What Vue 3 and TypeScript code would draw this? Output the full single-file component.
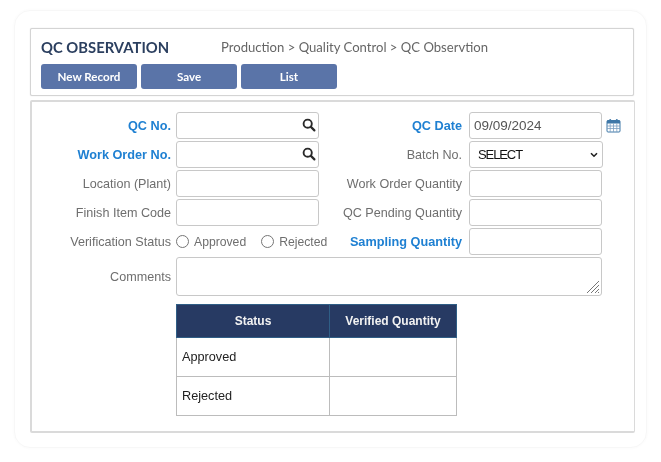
<script setup lang="ts">
const buttons: string[] = ['New Record', 'Save', 'List']
</script>

<template>
  <div class="page">
    <div class="card">
      <header class="panel head">
        <div class="title-row">
          <h1 class="title">QC OBSERVATION</h1>
          <span class="crumbs">Production &gt; Quality Control &gt; QC Observtion</span>
        </div>
        <div class="actions">
          <button v-for="b in buttons" :key="b" class="btn" type="button">{{ b }}</button>
        </div>
      </header>

      <section class="panel body">
        <div class="form">
          <label class="lbl req">QC No.</label>
          <div class="search"><input class="inp" type="text" />
            <svg class="mag" viewBox="0 0 14 14" width="14" height="14"><circle cx="5.7" cy="5.7" r="4.1" fill="none" stroke="#2a2a2a" stroke-width="1.9"/><path d="M8.9 8.9 L12.4 12.4" stroke="#2a2a2a" stroke-width="2.2" stroke-linecap="round"/></svg>
          </div>
          <label class="lbl lbl-r req">QC Date</label>
          <input class="inp date" type="text" value="09/09/2024" />
          <svg class="cal" viewBox="0 0 15 15" width="15" height="15">
            <rect x="1" y="2.5" width="13" height="11.5" rx="1" fill="#fff" stroke="#3f78a8" stroke-width="1"/>
            <rect x="1" y="2.5" width="13" height="3" fill="#3f78a8"/>
            <rect x="3.2" y="1" width="2" height="3" rx="1" fill="#3f78a8"/><rect x="9.8" y="1" width="2" height="3" rx="1" fill="#3f78a8"/>
            <path d="M1 8h13M1 10.5h13M4.2 5.5v8.5M7.5 5.5v8.5M10.8 5.5v8.5" stroke="#7b9fc2" stroke-width=".8" fill="none"/>
          </svg>

          <label class="lbl req">Work Order No.</label>
          <div class="search"><input class="inp" type="text" />
            <svg class="mag" viewBox="0 0 14 14" width="14" height="14"><circle cx="5.7" cy="5.7" r="4.1" fill="none" stroke="#2a2a2a" stroke-width="1.9"/><path d="M8.9 8.9 L12.4 12.4" stroke="#2a2a2a" stroke-width="2.2" stroke-linecap="round"/></svg>
          </div>
          <label class="lbl lbl-r">Batch No.</label>
          <select class="sel"><option>SELECT</option></select>
          <span></span>

          <label class="lbl">Location (Plant)</label>
          <input class="inp" type="text" />
          <label class="lbl lbl-r">Work Order Quantity</label>
          <input class="inp" type="text" />
          <span></span>

          <label class="lbl">Finish Item Code</label>
          <input class="inp" type="text" />
          <label class="lbl lbl-r">QC Pending Quantity</label>
          <input class="inp" type="text" />
          <span></span>

          <label class="lbl">Verification Status</label>
          <div class="radios">
            <label class="radio"><input type="radio" name="vs" />Approved</label>
            <label class="radio"><input type="radio" name="vs" />Rejected</label>
          </div>
          <label class="lbl lbl-r req">Sampling Quantity</label>
          <input class="inp" type="text" />
          <span></span>

          <label class="lbl comments-lbl">Comments</label>
          <div class="area-wrap">
            <textarea class="area"></textarea>
            <svg class="grip" viewBox="0 0 14 14" width="14" height="14"><path d="M1 13 13 1M5 13 13 5M9 13l4-4M12 13l1-1" stroke="#777" stroke-width="1" fill="none"/></svg>
          </div>
        </div>

        <table class="tbl">
          <thead>
            <tr><th class="c1">Status</th><th class="c2">Verified Quantity</th></tr>
          </thead>
          <tbody>
            <tr><td>Approved</td><td></td></tr>
            <tr><td>Rejected</td><td></td></tr>
          </tbody>
        </table>
      </section>
    </div>
  </div>
</template>

<style>
html, body { margin: 0; background: #fff; }
</style>

<style scoped>
.page {
  width: 661px;
  height: 462px;
  box-sizing: border-box;
  padding: 10px 14px 14px;
  background: #fff;
  font-family: "Liberation Sans", Arial, sans-serif;
  filter: blur(0.3px);
}
.card {
  width: 633px;
  height: 438px;
  box-sizing: border-box;
  padding: 17px 12px 0 15px;
  border: 1px solid #f7f7f7;
  border-radius: 16px;
  box-shadow: 0 0 3px rgba(0, 0, 0, .03);
  display: flex;
  flex-direction: column;
  gap: 4px;
}
.panel {
  box-sizing: border-box;
  border: 1px solid #d4d4d4;
  border-radius: 2px;
  background: #fff;
}
.head {
  width: 604px;
  height: 68px;
  padding: 0 10px;
  box-shadow: 0 0 1px #ccc;
}
.title-row {
  display: flex;
  align-items: center;
  height: 35px;
}
.title {
  margin: 0;
  width: 180px;
  font: 700 14.8px Lato, "Open Sans", sans-serif;
  color: #2b3f5f;
  white-space: nowrap;
}
.crumbs {
  font: 400 13.1px Lato, "Open Sans", sans-serif;
  color: #666;
  white-space: nowrap;
}
.actions {
  display: flex;
  gap: 4px;
}
.btn {
  width: 96px;
  height: 25px;
  padding: 0;
  border: 0;
  border-radius: 3px;
  background: #5a74a8;
  color: #fff;
  font: 700 11.6px Lato, "Open Sans", sans-serif;
}
.body {
  width: 605px;
  height: 333px;
  padding: 10px 0 0 0;
  border-width: 2px 1px 2px 2px;
  border-color: #dadada;
}
.form {
  display: grid;
  grid-template-columns: 144px 143px 150px 133px 15px;
  grid-auto-rows: 27px;
  row-gap: 2px;
  align-items: center;
}
.lbl {
  padding-right: 5px;
  font-size: 12.6px;
  color: #6e6e6e;
  text-align: right;
  white-space: nowrap;
}
.lbl-r { padding-right: 7px; }
.req {
  color: #1f80d2;
  font-weight: 700;
  font-size: 12.7px;
}
.inp {
  display: block;
  width: 100%;
  height: 27px;
  box-sizing: border-box;
  padding: 0 4px;
  border: 1px solid #c8c8c8;
  border-radius: 3px;
  background: #fff;
  font: 12px "Liberation Sans", Arial, sans-serif;
  color: #555;
  outline: none;
}
.date { font-size: 13.5px; }
.search { position: relative; }
.mag {
  position: absolute;
  right: 3px;
  top: 6px;
}
.cal { margin-left: 4px; }
.sel {
  width: 134px;
  height: 27px;
  box-sizing: border-box;
  padding: 0 8px;
  border: 1px solid #c8c8c8;
  border-radius: 3px;
  appearance: none;
  background: #fff url("data:image/svg+xml;utf8,<svg xmlns='http://www.w3.org/2000/svg' width='8' height='6'><path d='M1 1.2 4 4.2 7 1.2' fill='none' stroke='%23222' stroke-width='1.6'/></svg>") no-repeat right 4px center;
  font: 13px "Liberation Sans", Arial, sans-serif;
  letter-spacing: -1.1px;
  color: #111;
}
.radios {
  display: flex;
  align-items: center;
  gap: 15px;
  white-space: nowrap;
}
.radio {
  display: inline-flex;
  align-items: center;
  gap: 5px;
  font-size: 12.2px;
  color: #6e6e6e;
}
.radio input { margin: 0; width: 13px; height: 13px; }
.comments-lbl { align-self: start; padding-top: 13px; }
.area-wrap {
  grid-column: 2 / 5;
  position: relative;
  height: 39px;
  align-self: start;
}
.area {
  display: block;
  width: 100%;
  height: 39px;
  box-sizing: border-box;
  border: 1px solid #c8c8c8;
  border-radius: 3px;
  outline: none;
  resize: none;
}
.grip {
  position: absolute;
  right: 2px;
  bottom: 2px;
}
.tbl {
  margin: 20px 0 0 144px;
  border-collapse: collapse;
  table-layout: fixed;
  width: 281px;
  font-size: 12.7px;
}
.c1 { width: 152px; }
.c2 { width: 126px; }
.tbl th {
  height: 32px;
  padding: 0;
  background: #273a63;
  color: #f2f2f2;
  border: 1px solid #2f5e86;
  font-size: 12px;
  font-weight: 700;
}
.tbl td {
  height: 38px;
  padding: 0 5px;
  border: 1px solid #bcbcbc;
  color: #222;
}
</style>
